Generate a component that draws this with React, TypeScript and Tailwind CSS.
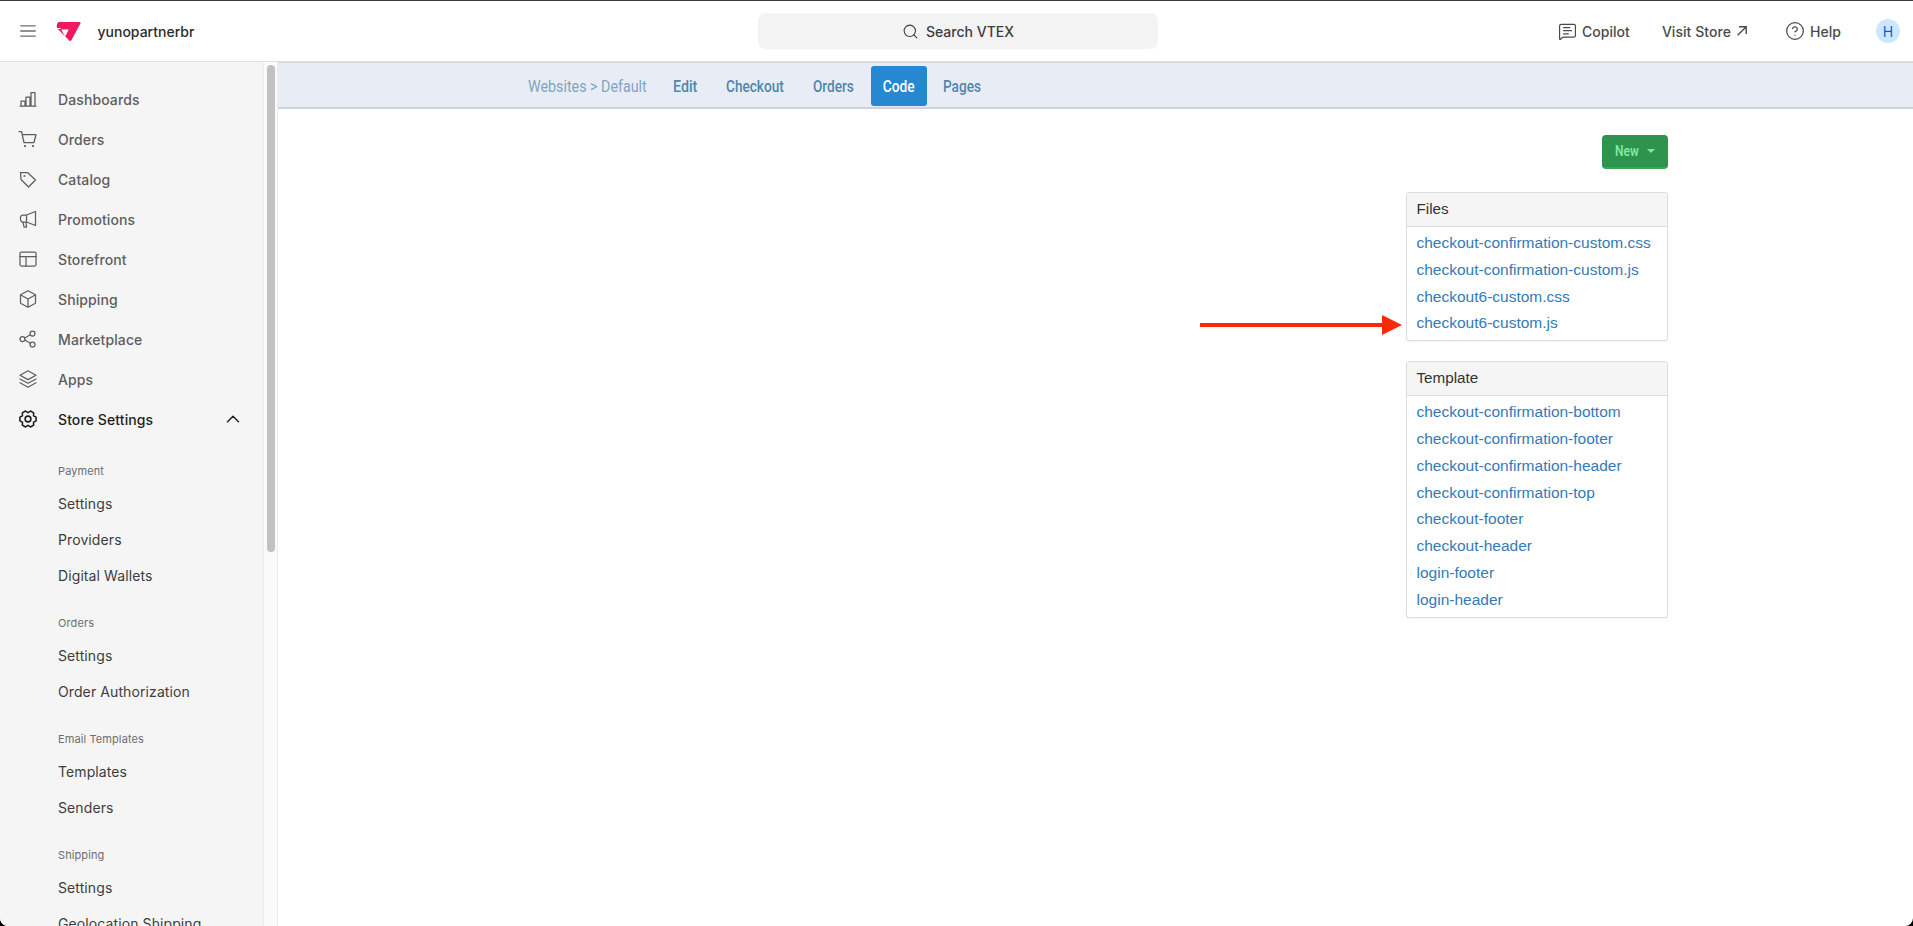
import React from "react";
import { Search, MessageSquareText, CircleHelp, ChevronUp } from "lucide-react";

const sw = 1.25;

function Ico({ children }: { children: React.ReactNode }) {
  return (
    <svg width="20" height="20" viewBox="0 0 20 20" fill="none" stroke="currentColor" strokeWidth={sw} strokeLinecap="round" strokeLinejoin="round">
      {children}
    </svg>
  );
}

const gearPoints = [0, 60, 120, 180, 240, 300]
  .flatMap((a) => [
    [8.3, a - 13],
    [8.3, a + 13],
    [6.4, a + 30],
  ])
  .map(([r, d]) => `${(10 + r * Math.cos((d * Math.PI) / 180)).toFixed(2)},${(10 + r * Math.sin((d * Math.PI) / 180)).toFixed(2)}`)
  .join(" ");

const icons: Record<string, React.ReactNode> = {
  Dashboards: (
    <Ico>
      <path d="M2 17h16M3 17v-5h4v5M8 17V8h4v9M13 17V3.500h4V17" />
    </Ico>
  ),
  Orders: (
    <Ico>
      <path d="M1 2.500h2.500l2.500 11h10l2-8H4.500" />
      <circle cx="7" cy="17" r="0.5" />
      <circle cx="15" cy="17" r="0.5" />
    </Ico>
  ),
  Catalog: (
    <Ico>
      <path d="M2.500 3.500h7l8 7.500-7 7L3 10.500z" />
      <circle cx="6.500" cy="7" r="0.4" />
    </Ico>
  ),
  Promotions: (
    <Ico>
      <path d="M17.500 2.500v14l-9-3.500H5a2.500 2.500 0 0 1-2.500-2.500v-2A2.500 2.500 0 0 1 5 6h3.500zM8.500 6v7M5 13l1 5h2.500l-.5-4.500" />
    </Ico>
  ),
  Storefront: (
    <Ico>
      <rect x="2" y="3" width="16" height="14" rx="1.500" />
      <path d="M2 7.500h16M8 7.500V17" />
    </Ico>
  ),
  Shipping: (
    <Ico>
      <path d="M10 1.800l7.500 4v8.400l-7.500 4-7.500-4V5.800zM2.800 6L10 10l7.200-4M10 10v8" />
    </Ico>
  ),
  Marketplace: (
    <Ico>
      <circle cx="4.500" cy="10" r="2.500" />
      <circle cx="14.500" cy="4.500" r="2.500" />
      <circle cx="14.500" cy="15.500" r="2.500" />
      <path d="M6.800 9l5.500-3.200M6.800 11l5.500 3.200" />
    </Ico>
  ),
  Apps: (
    <Ico>
      <path d="M10 1.800l8 4.400-8 4.400-8-4.400zM2 10l8 4.300 8-4.300M2 13.800l8 4.400 8-4.400" />
    </Ico>
  ),
};

const mainNav = ["Dashboards", "Orders", "Catalog", "Promotions", "Storefront", "Shipping", "Marketplace", "Apps"];

const groups = [
  { title: "Payment", items: ["Settings", "Providers", "Digital Wallets"] },
  { title: "Orders", items: ["Settings", "Order Authorization"] },
  { title: "Email Templates", items: ["Templates", "Senders"] },
  { title: "Shipping", items: ["Settings", "Geolocation Shipping"] },
];

const files = [
  "checkout-confirmation-custom.css",
  "checkout-confirmation-custom.js",
  "checkout6-custom.css",
  "checkout6-custom.js",
];
const templates = [
  "checkout-confirmation-bottom",
  "checkout-confirmation-footer",
  "checkout-confirmation-header",
  "checkout-confirmation-top",
  "checkout-footer",
  "checkout-header",
  "login-footer",
  "login-header",
];

function Panel({ title, items, arrowAt }: { title: string; items: string[]; arrowAt?: string }) {
  return (
    <div className="w-[262px] rounded-[3px] border border-[#dddddd] shadow-[0_1px_1px_rgba(0,0,0,0.05)] bg-white">
      <div className="h-[34px] flex items-center px-[9.500px] bg-[#f5f5f5] border-b border-[#dddddd] text-[15.200px] text-[#333333] rounded-t-[3px]">{title}</div>
      <ul className="pt-[3px] pb-[3px] px-[9.500px]">
        {items.map((it) => (
          <li key={it} className="relative h-[26.800px] leading-[26.800px] text-[15.500px] text-[#337ab7] whitespace-nowrap">
            {it}
            {it === arrowAt && (
              <svg className="absolute left-[-217px] top-[5px]" width="202" height="20" viewBox="0 0 202 20">
                <rect x="0" y="8" width="184" height="4" fill="#f92a06" />
                <polygon points="182,0 202,10 182,20" fill="#f92a06" />
              </svg>
            )}
          </li>
        ))}
      </ul>
    </div>
  );
}

export default function App() {
  return (
    <div className="w-screen h-screen bg-black">
      <div className="w-full h-full overflow-hidden rounded-b-[8px] flex flex-col bg-white font-['Inter',sans-serif]">
        <header className="h-[62px] shrink-0 flex items-center border-t border-t-[#3c3c3c] border-b border-b-[#e0e0e0] bg-white">
          <div className="w-[264px] flex items-center pl-[20px]">
            <svg width="16" height="12" viewBox="0 0 16 12" stroke="#6e6e6e" strokeWidth="1.300" strokeLinecap="round">
              <path d="M0.700 0.800h14.600M0.700 6h14.600M0.700 11.200h14.600" />
            </svg>
            <svg className="ml-[20px] mt-[1px]" width="25" height="21" viewBox="6 4 26 22">
              <path d="M9 5h21.500c1 0 1.500.8 1 1.700L22.200 24c-.8 1.400-2.200 1.400-3 0L7 11.500C6.400 9 7 5 9 5z" fill="#f0185f" />
              <path d="M11.500 13H19.300L15.400 20.500z" fill="#ffffff" />
              <path d="M5.500 11.300H11L10.500 12.500H5.500z" fill="#ffffff" />
            </svg>
            <span className="ml-[16.500px] text-[14px] font-medium text-[#2b2b2b]">yunopartnerbr</span>
          </div>
          <div className="flex-1 flex justify-start pl-[494px]">
            <div className="w-[400px] h-[36px] rounded-[8px] bg-[#f3f3f3] flex items-center justify-center gap-[7px] text-[14px] font-medium text-[#3d3d3d]">
              <Search size={17} strokeWidth={1.5} />
              <span>Search VTEX</span>
            </div>
          </div>
          <div className="flex items-center text-[14px] font-medium text-[#4a4a4a] pr-[13px] tracking-[0.05px]">
            <MessageSquareText size={19} strokeWidth={1.5} className="mr-[5px]" />
            <span>Copilot</span>
            <span className="ml-[32px]">Visit Store</span>
            <svg className="ml-[6px]" width="10" height="10" viewBox="0 0 10 10" fill="none" stroke="currentColor" strokeWidth="1.400">
              <path d="M0.700 9.300L9 1M2 .800h7.200V8" />
            </svg>
            <CircleHelp size={20} strokeWidth={1.5} className="ml-[38px] mr-[5px]" />
            <span>Help</span>
            <span className="ml-[35px] w-[24px] h-[24px] rounded-full bg-[#cce8ff] text-[#0b5fd6] font-normal flex items-center justify-center">H</span>
          </div>
        </header>

        <div className="flex-1 min-h-0 flex">
          <aside className="w-[264px] shrink-0 bg-[#f5f5f5] border-r border-[#ebebeb] overflow-hidden pt-[17px] tracking-[0.1px]">
            {mainNav.map((n) => (
              <div key={n} className="h-[40px] flex items-center pl-[18px] text-[14px] font-medium text-[#5e5e5e]">
                <span className="w-[40px] shrink-0">{icons[n]}</span>
                {n}
              </div>
            ))}
            <div className="h-[40px] flex items-center pl-[18px] pr-[19px] text-[14px] font-medium text-[#1f1f1f]">
              <span className="w-[40px] shrink-0">
                <svg width="20" height="20" viewBox="0 0 20 20" fill="none" stroke="currentColor" strokeWidth="1.600" strokeLinejoin="round">
                  <polygon points={gearPoints} />
                  <circle cx="10" cy="10" r="2.900" />
                </svg>
              </span>
              <span className="flex-1">Store Settings</span>
              <ChevronUp size={22} strokeWidth={1.6} />
            </div>
            <div className="pl-[58px] pt-[12px]">
              {groups.map((g) => (
                <div key={g.title + g.items[0]} className="pt-[8px] pb-[10px]">
                  <div className="h-[24px] mb-[2px] flex items-center text-[11px] text-[#6e6e6e]">{g.title}</div>
                  {g.items.map((i) => (
                    <div key={i} className="h-[36px] flex items-center text-[14px] text-[#3d3d3d]">{i}</div>
                  ))}
                </div>
              ))}
            </div>
          </aside>
          <div className="w-[14px] shrink-0 bg-[#fafafa] border-r border-[#ebebeb] pt-[3px] pl-[3px]">
            <div className="w-[8px] h-[487px] rounded-full bg-[#c1c1c1]" />
          </div>
          <main className="flex-1 min-w-0">
            <nav className="h-[47px] pt-[2px] bg-[#e8edf5] border-t border-t-[#c9dae3] border-b-2 border-b-[#cdd3dc] flex items-center pl-[250px] text-[17px] font-medium text-[#4f86ad] font-['Roboto',sans-serif] whitespace-nowrap">
              <span className="w-[145px] pt-[2px] shrink-0 origin-left scale-x-[0.84] font-normal text-[#7fa5c0]">Websites &gt; Default</span>
              <span className="w-[53px] pt-[2px] shrink-0 origin-left scale-x-[0.84]">Edit</span>
              <span className="w-[87px] pt-[2px] shrink-0 origin-left scale-x-[0.8]">Checkout</span>
              <span className="w-[58px] pt-[2px] shrink-0 origin-left scale-x-[0.8]">Orders</span>
              <span className="w-[56px] h-[40px] shrink-0 rounded-[3px] bg-[#2588d0] flex items-center justify-center">
                <span className="block pt-[2px] scale-x-[0.81] text-white">Code</span>
              </span>
              <span className="ml-[16px] pt-[2px] origin-left scale-x-[0.8]">Pages</span>
            </nav>
            <section className="pr-[245px] pt-[26px] flex flex-col items-end">
              <div className="w-[66px] h-[34px] rounded-[4px] bg-[#2e934c] border-b-2 border-b-[#3aa65a] text-[#7fe8a5] text-[15px] font-semibold font-['Roboto',sans-serif] flex items-center pl-[13px]">
                <span className="w-[32px] shrink-0 origin-left scale-x-[0.8]">New</span>
                <span className="w-0 h-0 border-x-[4px] border-x-transparent border-t-[4px] border-t-[#7fe8a5]" />
              </div>
              <div className="mt-[23px] font-['Liberation_Sans',sans-serif]">
                <Panel title="Files" items={files} arrowAt="checkout6-custom.js" />
              </div>
              <div className="mt-[20px] font-['Liberation_Sans',sans-serif]">
                <Panel title="Template" items={templates} />
              </div>
            </section>
          </main>
        </div>
      </div>
    </div>
  );
}
